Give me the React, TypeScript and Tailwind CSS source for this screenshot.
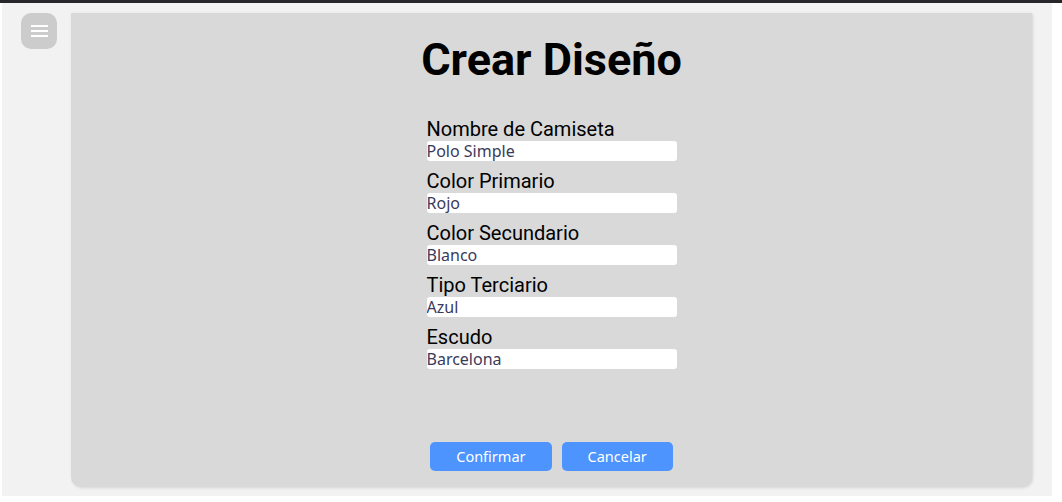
import { useState } from 'react'

const fields = [
  { label: 'Nombre de Camiseta', value: 'Polo Simple' },
  { label: 'Color Primario', value: 'Rojo' },
  { label: 'Color Secundario', value: 'Blanco' },
  { label: 'Tipo Terciario', value: 'Azul' },
  { label: 'Escudo', value: 'Barcelona' }
]

function MenuButton() {
  return (
    <button className="flex h-9 w-9 shrink-0 flex-col items-center justify-center gap-[3px] rounded-[10px] bg-[#cccccc]">
      <span className="h-[2px] w-[17px] bg-white" />
      <span className="h-[2px] w-[17px] bg-white" />
      <span className="h-[2px] w-[17px] bg-white" />
    </button>
  )
}

export default function App() {
  const [values, setValues] = useState(fields.map((f) => f.value))

  return (
    <div className="h-[502px] w-full overflow-hidden bg-white font-['Roboto',sans-serif]">
      <div className="h-[3px] w-full bg-[#26262b]" />
      <div className="ml-[2px] flex h-[493px] w-[1050px] gap-[14px] bg-[#f2f2f2] pl-[19px] pt-[10px]">
        <MenuButton />
        <main className="flex h-[474px] w-[961px] flex-col items-center rounded-b-[10px] bg-[#d9d9d9] shadow-[1px_1px_3px_rgba(0,0,0,0.12)]">
          <h1 className="mt-[20px] text-[45px] font-bold leading-[53px] text-black">Crear Diseño</h1>
          <form className="mt-[32px] flex w-[250px] flex-col gap-[9px]">
            {fields.map((f, i) => (
              <div key={f.label} className="flex flex-col">
                <label className="text-[20px] leading-[23px] text-black">{f.label}</label>
                <input
                  value={values[i]}
                  onChange={(e) => setValues(values.map((v, j) => (j === i ? e.target.value : v)))}
                  className="h-[20px] rounded-[3px] bg-white px-0 font-['Noto_Sans',sans-serif] text-[16px] leading-[20px] text-[#3a3a5a] outline-none"
                />
              </div>
            ))}
          </form>
          <div className="mt-auto mb-[16px] flex gap-[10px]">
            <button className="h-[29px] rounded-[5px] bg-[#4d94ff] px-[26px] font-['Noto_Sans',sans-serif] text-[14.5px] text-white">
              Confirmar
            </button>
            <button className="h-[29px] rounded-[5px] bg-[#4d94ff] px-[26px] font-['Noto_Sans',sans-serif] text-[14.5px] text-white">
              Cancelar
            </button>
          </div>
        </main>
      </div>
    </div>
  )
}
